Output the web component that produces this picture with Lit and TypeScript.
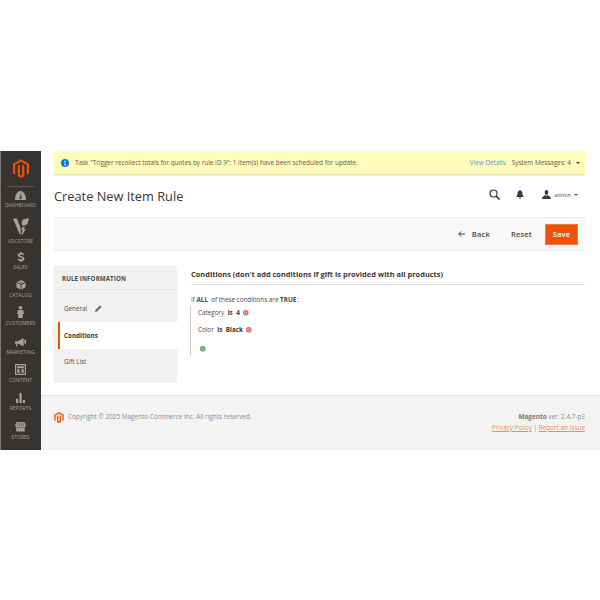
import { LitElement, html, css, svg } from "lit";
import { customElement } from "lit/decorators.js";

const logo = (cls: string) => html`<svg class=${cls} viewBox="0 0 24 28"><path fill="#eb5202" d="M12 0 0 7v14l3.300 1.900V8.900L12 3.900l8.700 5v14L24 21V7z"/><path fill="#eb5202" d="M13.600 7.900v15.600L12 24.400l-1.600-.9V7.900L7 9.900v15.900l5 2.200 5-2.200V9.900z"/></svg>`;

const icons: Record<string, unknown> = {
  dash: svg`<path d="M1 9a6 6 0 0 1 12 0v.5H1z"/><path d="M6.500 8 7.600 4l.6 4z" fill="#373330"/><circle cx="7" cy="8" r="1" fill="#373330"/>`,
  vdc: svg`<path d="M0 1.500h3.600l3.400 8 .4 6.500-1.600-1.500zM8 6l1-3.500L15 1l-1.500 5.500L9 8zM8.500 9.500l3-1.200-1.600 3 2.300-.5-3.700 5.200-.6-.8 1.200-2.700-1-.6z"/>`,
  sales: svg`<path d="M6 0h2v1.400c1.600.2 2.700.9 3 1.200L10 4.600C9.200 4 8 3.600 7 3.600c-1 0-1.400.4-1.400.9 0 1.800 5.800 1.200 5.800 5 0 1.700-1.200 2.800-3.400 3V14H6v-1.500c-1.600-.2-2.800-.9-3.400-1.400l1.100-2c1 .8 2.200 1.200 3.300 1.200 1 0 1.600-.4 1.600-1 0-1.900-5.800-1.200-5.800-5C2.800 2.700 3.900 1.600 6 1.400z"/>`,
  catalog: svg`<path d="M7 0 1 2.700 7 5.500l6-2.800zM.6 3.800v6.500L6.400 13.800V6.500zM13.400 3.800 7.600 6.500v7.300l5.800-3.500z"/><path d="m3.500 1.500 6 3v2" fill="none" stroke="#373330" stroke-width=".7"/>`,
  customers: svg`<circle cx="7" cy="2.300" r="2.300"/><path d="M4 5.200h6l1 5.300H9.600V16H4.400v-5.500H3z"/>`,
  marketing: svg`<path d="M0 5h4l7-4v10L4 8H3v3.500H1.500V8H0zM12 3h2v5h-2z"/>`,
  content: svg`<path fill-rule="evenodd" d="M1 1h12v12H1zM2.300 2.300v9.400h9.400V2.300z"/><path d="M3.400 3.500h7.200v2H3.400zM3.400 6.600H6v4H3.400zM8 6.600h2.600v4H8z"/>`,
  reports: svg`<path d="M2 8h2.500v5H2zM5.800 1h2.500v12H5.800zM9.600 9.500h2.500V13H9.600z"/>`,
  stores: svg`<path d="M2 1h10l2 4.500c0 1-.8 1.500-1.600 1.500v6.500H1.600V7C.8 7 0 6.500 0 5.500z"/><path d="M3.500 2v4.500M6 2v4.500M8.500 2v4.500M11 2v4.500M3 8.500h8" stroke="#373330" stroke-width=".7" fill="none"/>`,
};

const nav = [
  ["DASHBOARD", "dash", "first", 9, 11, "1 3 12 6.500"],
  ["VDCSTORE", "vdc", "tall", 18, 16, "0 1 15 16"],
  ["SALES", "sales", "short", 10, 8, "2 0 10 14"],
  ["CATALOG", "catalog", "", 10, 10, "0 0 14 14"],
  ["CUSTOMERS", "customers", "", 12, 7, "3 0 8 16"],
  ["MARKETING", "marketing", "wide", 9, 11, "0 1 14 11"],
  ["CONTENT", "content", "", 11, 11, "1 1 12 12"],
  ["REPORTS", "reports", "", 10, 9, "2 1 10 12"],
  ["STORES", "stores", "wide", 10, 11, "0 1 14 13"],
] as const;

@customElement("app-root")
export class AppRoot extends LitElement {
  static styles = css`
    :host { display: block; width: 600px; height: 600px; background: #fff; font-family: "Open Sans", sans-serif; color: #41362f; overflow: hidden; }
    * { box-sizing: border-box; }
    .page { display: flex; margin-top: 151px; height: 299px; }
    .side { width: 41px; flex: none; background: #373330; border-left: 1px solid #777; display: flex; flex-direction: column; align-items: center; }
    .mlogo { width: 16px; height: 19px; margin-top: 8px; margin-left: -1px; flex: none; }
    .sep { width: 27px; height: 1px; background: #5a5652; margin: 8px 0 0 -1px; flex: none; }
    .nav { display: flex; flex-direction: column; align-items: center; justify-content: flex-end; height: 28px; flex: none; color: #a5a19b; font-size: 5px; line-height: 6px; gap: 2px; width: 100%; padding-right: 1px; letter-spacing: .05px; }
    .nav svg { fill: #a5a19b; display: block; }
    .nav.first { height: 21px; }
    .nav.tall { height: 36px; }
    .nav.short { height: 26px; }
    .nav.wide { height: 29px; }
    .nav span { height: 6px; }
    .main { flex: 1; min-width: 0; display: flex; flex-direction: column; }
    .content { flex: 1; padding: 0 15px 0 13px; display: flex; flex-direction: column; }
    .notice { height: 24px; background: #fffbbb; border-bottom: 1px solid #e8e4b4; box-shadow: 0 1px 1px #eee; display: flex; align-items: center; font-size: 6.400px; padding: 0 5px 0 7px; color: #5b5b4f; }
    .notice svg { width: 8px; height: 8px; margin-right: 6px; flex: none; }
    .notice .msg { flex: 1; }
    .notice a { color: #57a3bd; margin: 0 6px 0 -1px; }
    .caret { width: 0; height: 0; border: 2px solid transparent; border-top: 2.500px solid #41362f; border-bottom: 0; margin-left: 5px; display: inline-block; vertical-align: middle; }
    .head { height: 42px; display: flex; align-items: center; }
    .head h1 { font-size: 12.800px; font-weight: 400; margin: 0; flex: 1; color: #41362f; }
    .tools { display: flex; align-items: center; padding: 0 7px 3px 0; font-size: 5.700px; color: #555; }
    .tools svg { display: block; }
    .bell { margin: 0 18px 0 16px; }
    .user { margin-right: 3px; }
    .tools .caret { margin-left: 3px; border-top-color: #555; }
    .actions { height: 34px; background: #f8f8f8; border-top: 1px solid #eee; border-bottom: 1px solid #eee; display: flex; align-items: center; justify-content: flex-end; padding-right: 7px; font-size: 7.500px; font-weight: 600; color: #514943; letter-spacing: .2px; }
    .back { display: flex; align-items: center; gap: 7px; margin-right: 21px; }
    .reset { margin-right: 13px; }
    .save { width: 33px; height: 21px; background: #eb5202; border: 1px solid #f37b44; color: #fff; display: flex; align-items: center; justify-content: center; }
    .body { display: flex; margin-top: 15px; gap: 14px; }
    .tabs { width: 123px; height: 115px; flex: none; background: #f1f1f1; box-shadow: 0 1px 1px #e8e8e8; font-size: 6.300px; color: #514943; display: flex; flex-direction: column; }
    .tabs .title { height: 24px; font-weight: 700; font-size: 6.200px; display: flex; align-items: center; padding: 1px 0 0 8px; border-bottom: 1px solid #e6e6e6; letter-spacing: .1px; }
    .tab { height: 27px; display: flex; align-items: center; padding-left: 10px; gap: 8px; }
    .tab.first { height: 32px; padding-top: 4px; }
    .tab.active { background: #fff; border-left: 2px solid #eb5202; margin-left: 4px; margin-right: -1px; padding-left: 4px; font-weight: 700; color: #41362f; }
    .tab.gift { align-items: flex-start; padding-top: 8px; flex: 1; }
    .panel { flex: 1; min-width: 0; }
    .panel h2 { margin: 0; font-size: 7.450px; font-weight: 700; height: 19px; border-bottom: 1px solid #dfdfd9; color: #41362f; line-height: 16px; }
    .cond { font-size: 6.300px; margin-top: 10px; color: #514943; line-height: 9px; }
    .tree { margin: 2px 0 0 -1px; border-left: 1px solid #ccc; padding: 2px 0 0 7px; height: 49px; }
    .row { height: 17px; display: flex; align-items: flex-start; gap: 3.500px; }
    .row b { color: #41362f; }
    .row svg { width: 5.500px; height: 5.500px; margin: 2px 0 0 0; }
    .plus svg { width: 5.500px; height: 5.500px; display: block; margin: 4px 0 0 2px; }
    .foot { height: 55px; flex: none; background: #f3f3f3; border-top: 1px solid #e4e4e4; display: flex; justify-content: space-between; padding: 15px 15px 0 13px; font-size: 6.400px; color: #8a8a8a; }
    .foot .copy { display: flex; align-items: flex-start; gap: 4px; }
    .flogo { width: 10px; height: 11px; flex: none; margin-top: 1px; }
    .foot .copy span { line-height: 11px; }
    .right { text-align: right; line-height: 11px; }
    .right b { color: #777; }
    .right a { color: #f58a56; text-decoration: underline; }
  `;

  render() {
    return html`<div class="page">
      <aside class="side">
        ${logo("mlogo")}
        <div class="sep"></div>
        ${nav.map(([label, icon, cls, h, w, box]) => html`<div class="nav ${cls}">
          <svg viewBox=${box} preserveAspectRatio="none" width=${w} height=${h}>${icons[icon]}</svg>
          <span>${label}</span>
        </div>`)}
      </aside>
      <div class="main">
        <div class="content">
          <div class="notice">
            <svg viewBox="0 0 16 16"><circle cx="8" cy="8" r="8" fill="#007bdb"/><circle cx="8" cy="4.500" r="1.300" fill="#fff"/><path d="M6.500 7h2.500v5h1v1.200H6.200V12h1V8.200h-.7z" fill="#fff"/></svg>
            <span class="msg">Task "Trigger recollect totals for quotes by rule ID 9": 1 item(s) have been scheduled for update.</span>
            <a>View Details</a>
            <span>System Messages: 4</span><i class="caret"></i>
          </div>
          <div class="head">
            <h1>Create New Item Rule</h1>
            <div class="tools">
              <svg width="11" height="11" viewBox="0 0 11 11"><circle cx="4.500" cy="4.500" r="3.500" fill="none" stroke="#41362f" stroke-width="1.200"/><path d="m7 7 3.500 3.500" stroke="#41362f" stroke-width="1.600"/></svg>
              <svg class="bell" width="8" height="9" viewBox="0 0 8 9"><path fill="#41362f" d="M4 0c.5 0 .8.3.8.8C6 1.200 6.500 2.200 6.500 3.500c0 2 .6 2.800 1.500 3.500H0c.9-.7 1.500-1.500 1.500-3.500C1.500 2.200 2 1.200 3.200.8 3.200.3 3.500 0 4 0zM3 7.600h2C5 8.400 4.500 9 4 9s-1-.6-1-1.400z"/></svg>
              <svg class="user" width="9" height="9" viewBox="0 0 10 9" preserveAspectRatio="none"><path fill="#41362f" d="M5 0c1.300 0 2 1 2 2.200C7 3.500 6.300 5 5 5S3 3.500 3 2.200C3 1 3.700 0 5 0zM3.500 4.900C3 5.800 0 6 0 9h10c0-3-3-3.200-3.500-4.100C6 5.500 5.500 5.800 5 5.800s-1-.3-1.500-.9z"/></svg>
              <span>admin</span><i class="caret"></i>
            </div>
          </div>
          <div class="actions">
            <span class="back"><svg width="7" height="6" viewBox="0 0 7 6"><path d="M3 .5.700 3 3 5.500M1 3h6" fill="none" stroke="#41362f"/></svg>Back</span>
            <span class="reset">Reset</span>
            <span class="save">Save</span>
          </div>
          <div class="body">
            <nav class="tabs">
              <div class="title">RULE INFORMATION</div>
              <div class="tab first">General
                <svg width="7" height="7" viewBox="0 0 7 7"><path d="M0 7 .5 5 5 .5 6.500 2 2 6.500z" fill="#666"/></svg>
              </div>
              <div class="tab active">Conditions</div>
              <div class="tab gift">Gift List</div>
            </nav>
            <section class="panel">
              <h2>Conditions (don't add conditions if gift is provided with all products)</h2>
              <div class="cond">
                If <b>ALL</b>&nbsp; of these conditions are <b>TRUE</b> :
                <div class="tree">
                  <div class="row"><span>Category</span><b>is</b><b>4</b>${this.minus()}</div>
                  <div class="row"><span>Color</span><b>is</b><b>Black</b>${this.minus()}</div>
                  <div class="plus"><svg viewBox="0 0 12 12"><circle cx="6" cy="6" r="6" fill="#5c9a5c"/><circle cx="6" cy="6" r="3.500" fill="#cfe5cf"/><path d="M3.500 6h5M6 3.500v5" stroke="#3c7a3c" stroke-width="1.500"/></svg></div>
                </div>
              </div>
            </section>
          </div>
        </div>
        <footer class="foot">
          <div class="copy">${logo("flogo")}<span>Copyright © 2025 Magento Commerce Inc. All rights reserved.</span></div>
          <div class="right"><b>Magento</b> ver. 2.4.7-p3<br><a>Privacy Policy</a> | <a>Report an Issue</a></div>
        </footer>
      </div>
    </div>`;
  }

  minus() {
    return html`<svg viewBox="0 0 12 12"><circle cx="6" cy="6" r="6" fill="#e0645f"/><circle cx="6" cy="6" r="3.500" fill="#f4c5c3"/><path d="m4 4 4 4M8 4l-4 4" stroke="#c43c36" stroke-width="1.400"/></svg>`;
  }
}
